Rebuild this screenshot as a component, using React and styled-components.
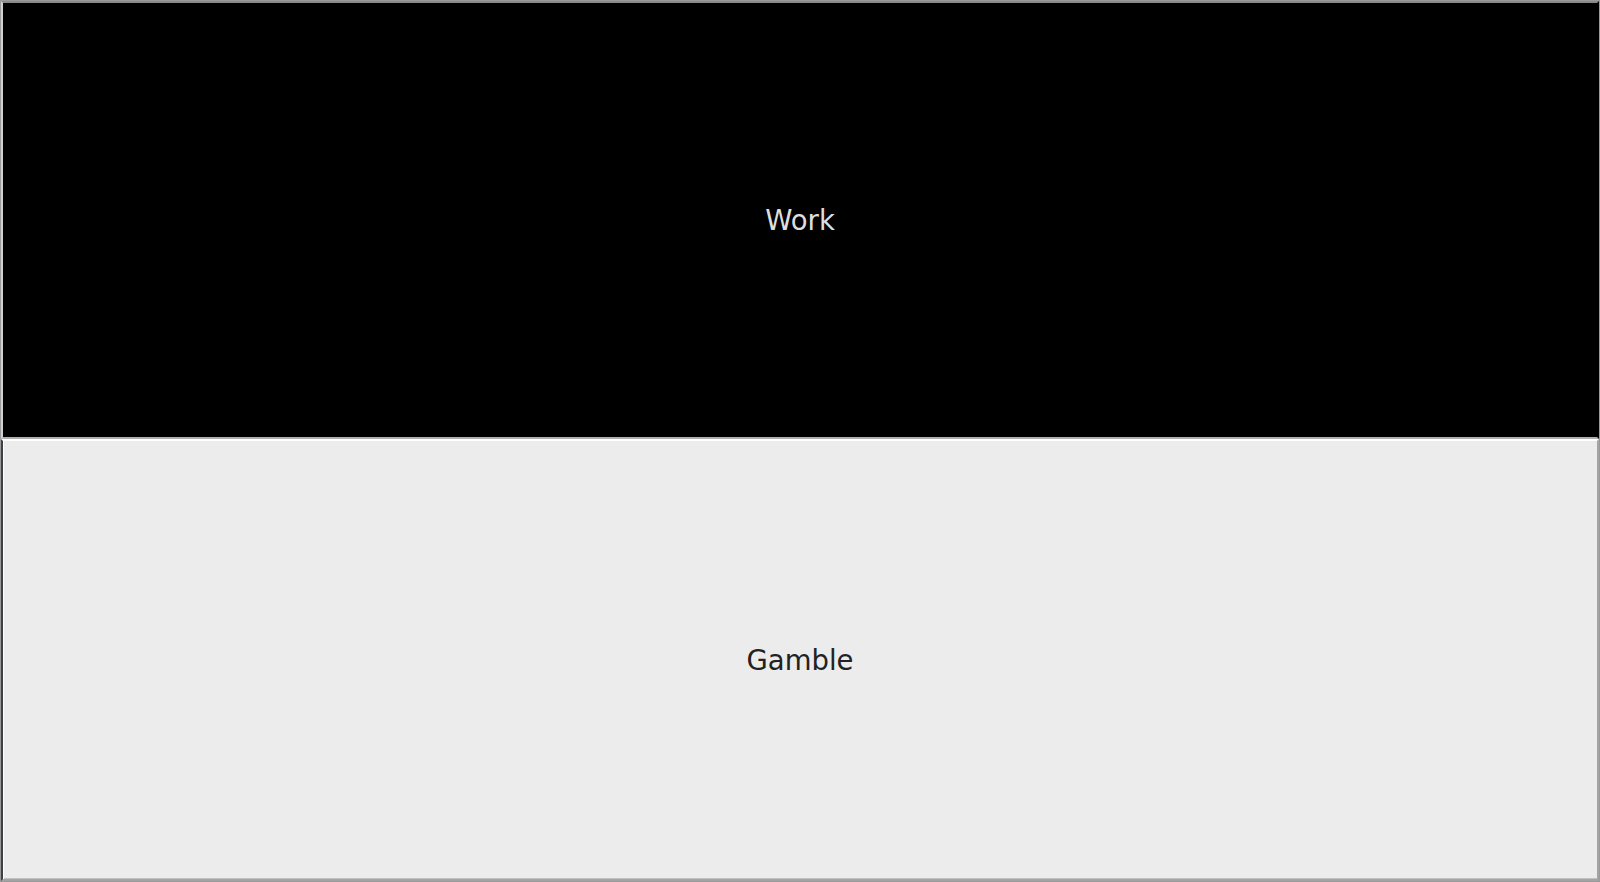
import React from 'react';
import styled, { createGlobalStyle } from 'styled-components';

const GlobalStyle = createGlobalStyle`
  html, body {
    margin: 0;
    padding: 0;
    background: #d9d9d9;
  }
`;

const Window = styled.div`
  width: 1600px;
  height: 882px;
  display: grid;
  grid-template-rows: 49.8fr 50.2fr;
  box-sizing: border-box;
  border: 1px solid #9a9a9a;
  background: #d9d9d9;
`;

const ChoiceButton = styled.button`
  display: flex;
  align-items: center;
  justify-content: center;
  margin: 0;
  padding: 0;
  font-family: "DejaVu Sans", sans-serif;
  font-size: 27.5px;
  cursor: pointer;
  color: ${(p) => (p.$active ? '#dedede' : '#222222')};
  background: ${(p) => (p.$active ? '#000000' : '#ececec')};
  border: 2px solid;
  border-color: ${(p) =>
    p.$active
      ? '#8a8a8a #000000 #b0b0b0 #d0d0d0'
      : '#ffffff #a4a4a4 #a4a4a4 #3c4048'};
  box-shadow: ${(p) => (p.$active ? 'none' : 'inset 1px 0 0 #ffffff, inset 0 -1px 0 #c0c0c0')};
  outline: none;
`;

export default function App() {
  return (
    <>
      <GlobalStyle />
      <Window>
        <ChoiceButton $active>Work</ChoiceButton>
        <ChoiceButton>Gamble</ChoiceButton>
      </Window>
    </>
  );
}
